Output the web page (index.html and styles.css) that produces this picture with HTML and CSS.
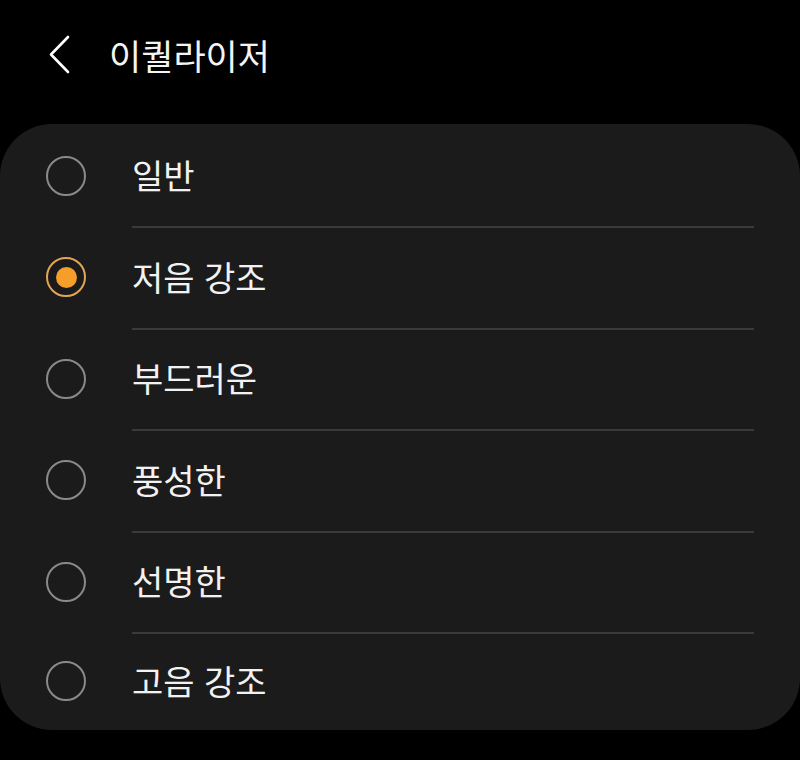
FILE: index.html
```html
<!DOCTYPE html>
<html lang="ko">
<head>
<meta charset="utf-8">
<link rel="stylesheet" href="styles.css">
</head>
<body>
<header class="header">
  <svg class="back" width="24" height="40" viewBox="0 0 24 40"><path d="M21 2 L4 19.5 L21 37" fill="none" stroke="#fff" stroke-width="2.6" stroke-linecap="round" stroke-linejoin="round"/></svg>
  <h1 class="title">이퀄라이저</h1>
</header>
<main class="card">
  <div class="row"><div class="radio-col"><span class="radio"></span></div><div class="label">일반</div></div>
  <div class="row"><div class="radio-col"><span class="radio on"></span></div><div class="label">저음 강조</div></div>
  <div class="row"><div class="radio-col"><span class="radio"></span></div><div class="label">부드러운</div></div>
  <div class="row"><div class="radio-col"><span class="radio"></span></div><div class="label">풍성한</div></div>
  <div class="row"><div class="radio-col"><span class="radio"></span></div><div class="label">선명한</div></div>
  <div class="row last"><div class="radio-col"><span class="radio"></span></div><div class="label">고음 강조</div></div>
</main>
</body>
</html>
```

FILE: styles.css
```css
html, body {
  margin: 0;
  padding: 0;
  background: #000;
}
body {
  width: 800px;
  height: 760px;
  overflow: hidden;
  font-family: "Noto Sans CJK KR", "Noto Sans", sans-serif;
  color: #f2f2f2;
}
.header {
  height: 124px;
  display: flex;
  align-items: flex-start;
  padding-left: 47px;
  box-sizing: border-box;
}
.back {
  margin-top: 35px;
  display: block;
}
.title {
  margin: 0 0 0 38px;
  padding-top: 30px;
  font-size: 35px;
  font-weight: 400;
  line-height: 50px;
  letter-spacing: 0;
  color: #f4f4f4;
}
.card {
  background: #1b1b1b;
  border-radius: 52px;
  padding-top: 2.5px;
  height: 606px;
  box-sizing: border-box;
}
.row {
  display: flex;
  height: 101.5px;
}
.row.last {
  height: 96px;
}
.radio-col {
  width: 132px;
  display: flex;
  align-items: center;
  justify-content: center;
}
.radio {
  width: 40px;
  height: 40px;
  box-sizing: border-box;
  border: 2px solid #8a8a8a;
  border-radius: 50%;
  display: flex;
  align-items: center;
  justify-content: center;
  margin-top: -3px;
}
.radio.on {
  border-color: #e5a453;
}
.radio.on::after {
  content: "";
  width: 21px;
  height: 21px;
  border-radius: 50%;
  background: #f59e2a;
}
.label {
  flex: 1;
  margin-right: 46px;
  display: flex;
  align-items: center;
  border-bottom: 2px solid #3a3a3a;
  font-size: 34px;
  line-height: 1;
  padding-bottom: 2px;
}
.row.last .label {
  border-bottom: none;
}
```
